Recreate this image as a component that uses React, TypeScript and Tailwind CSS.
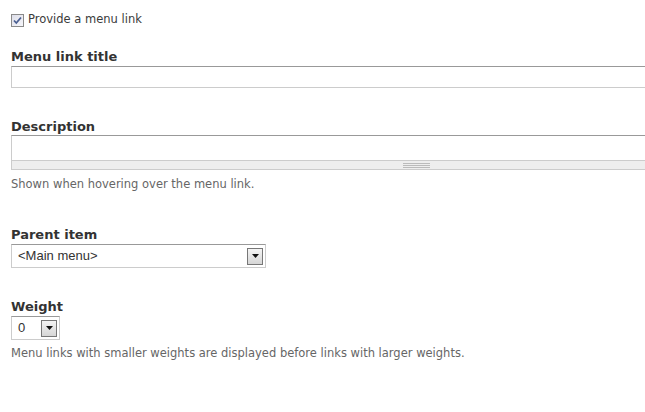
const labelCls = "block font-['DejaVu_Sans',sans-serif] text-[13px] leading-[15px] font-bold text-[#333]";
const helpCls = "font-['DejaVu_Sans',sans-serif] text-[11.5px] leading-[16px] text-[#666]";

function ArrowButton() {
  return (
    <span className="flex h-[17px] w-[16px] items-center justify-center border border-[#777] bg-gradient-to-b from-[#f4f4f4] to-[#d6d6d6]">
      <svg width="7" height="4" viewBox="0 0 7 4">
        <path d="M0 0H7L3.5 4Z" fill="#111" />
      </svg>
    </span>
  );
}

function FakeSelect({ value, width }: { value: string; width: string }) {
  return (
    <div
      className={`flex h-[24px] items-center justify-between border border-[#ccc] border-t-[#999] bg-white pl-[6px] pr-[2px] ${width}`}
    >
      <span className="font-['Liberation_Sans',sans-serif] text-[13px] text-[#333]">{value}</span>
      <ArrowButton />
    </div>
  );
}

export default function App() {
  return (
    <div className="min-h-screen w-full overflow-hidden bg-white">
      <div className="pl-[11px] pt-[11px]">
        <label className="flex items-center gap-[4px]">
          <svg width="13" height="13" viewBox="0 0 13 13" className="mt-[2px]">
            <defs>
              <linearGradient id="cb" x1="0" y1="0" x2="1" y2="1">
                <stop offset="0" stopColor="#dcdde8" />
                <stop offset="1" stopColor="#f7f7fb" />
              </linearGradient>
            </defs>
            <rect x="0.5" y="0.5" width="12" height="12" fill="url(#cb)" stroke="#8a8a8a" />
            <path d="M3 6.5L5.3 9L10 3.5" fill="none" stroke="#4a5f92" strokeWidth="1.8" />
          </svg>
          <span className="font-['DejaVu_Sans',sans-serif] text-[11.5px] leading-[16px] text-[#3b3b3b]">
            Provide a menu link
          </span>
        </label>

        <div className="mt-[22px]">
          <span className={labelCls}>Menu link title</span>
          <input
            type="text"
            className="mt-[2px] block h-[22px] w-[660px] border border-[#ccc] border-t-[#999] bg-white outline-none"
          />
        </div>

        <div className="mt-[31px]">
          <span className={labelCls}>Description</span>
          <textarea className="mt-[1px] block h-[25px] w-[660px] resize-none border border-b-0 border-[#ccc] border-t-[#999] bg-white outline-none" />
          <div className="flex h-[10px] w-[660px] flex-col items-start border border-[#ccc] bg-[#eee] pl-[391px] pt-[2px]">
            <span className="block h-px w-[27px] bg-[#bbb]" />
            <span className="mt-px block h-px w-[27px] bg-[#bbb]" />
            <span className="mt-px block h-px w-[27px] bg-[#bbb]" />
          </div>
          <p className={`${helpCls} mt-[6px]`}>Shown when hovering over the menu link.</p>
        </div>

        <div className="mt-[35px]">
          <span className={labelCls}>Parent item</span>
          <div className="mt-[2px]">
            <FakeSelect value="<Main menu>" width="w-[255px]" />
          </div>
        </div>

        <div className="mt-[31px]">
          <span className={labelCls}>Weight</span>
          <div className="mt-[2px]">
            <FakeSelect value="0" width="w-[49px]" />
          </div>
          <p className={`${helpCls} mt-[5px]`}>
            Menu links with smaller weights are displayed before links with larger weights.
          </p>
        </div>
      </div>
    </div>
  );
}
